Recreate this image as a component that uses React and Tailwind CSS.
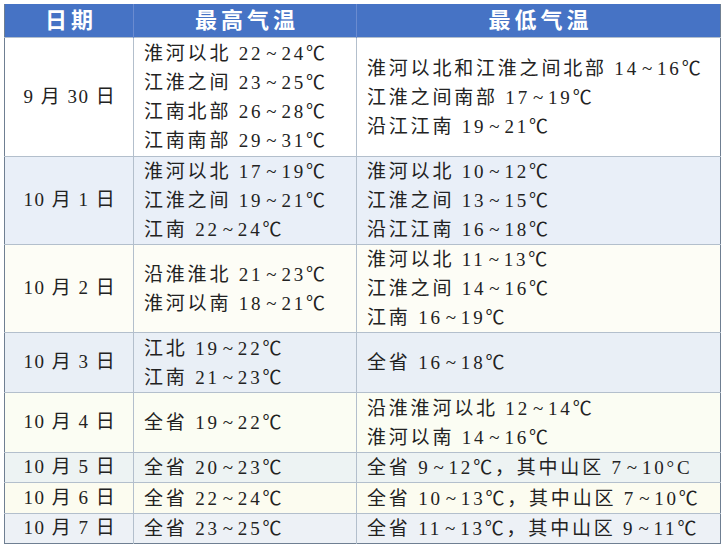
import React from 'react';

const rows = [
  {
    date: '9 月 30 日',
    high: ['淮河以北 22~24℃', '江淮之间 23~25℃', '江南北部 26~28℃', '江南南部 29~31℃'],
    low: ['淮河以北和江淮之间北部 14~16℃', '江淮之间南部 17~19℃', '沿江江南 19~21℃'],
    h: 'h-[119px]',
    bg: 'bg-white',
  },
  {
    date: '10 月 1 日',
    high: ['淮河以北 17~19℃', '江淮之间 19~21℃', '江南 22~24℃'],
    low: ['淮河以北 10~12℃', '江淮之间 13~15℃', '沿江江南 16~18℃'],
    h: 'h-[88px]',
    bg: 'bg-[#e9eff8]',
  },
  {
    date: '10 月 2 日',
    high: ['沿淮淮北 21~23℃', '淮河以南 18~21℃'],
    low: ['淮河以北 11~13℃', '江淮之间 14~16℃', '江南 16~19℃'],
    h: 'h-[88px]',
    bg: 'bg-[#fdfdf6]',
  },
  {
    date: '10 月 3 日',
    high: ['江北 19~22℃', '江南 21~23℃'],
    low: ['全省 16~18℃'],
    h: 'h-[60px]',
    bg: 'bg-[#e9eff6]',
  },
  {
    date: '10 月 4 日',
    high: ['全省 19~22℃'],
    low: ['沿淮淮河以北 12~14℃', '淮河以南 14~16℃'],
    h: 'h-[60px]',
    bg: 'bg-[#fbfdf3]',
  },
  {
    date: '10 月 5 日',
    high: ['全省 20~23℃'],
    low: ['全省 9~12℃，其中山区 7~10°C'],
    h: 'h-[29px]',
    bg: 'bg-[#edf3f3]',
  },
  {
    date: '10 月 6 日',
    high: ['全省 22~24℃'],
    low: ['全省 10~13℃，其中山区 7~10℃'],
    h: 'h-[31px]',
    bg: 'bg-[#fcfcf0]',
  },
  {
    date: '10 月 7 日',
    high: ['全省 23~25℃'],
    low: ['全省 11~13℃，其中山区 9~11℃'],
    h: 'h-[30px]',
    bg: 'bg-[#edf1f6]',
  },
];

// tilde sits a bit tighter than a normal space would give
function Temp({ text }) {
  const parts = text.split('~');
  return (
    <span className="leading-[29px] whitespace-nowrap">
      {parts.map((p, i) => (
        <React.Fragment key={i}>
          {i > 0 && <span className="ml-[3px] mr-[2px]">~</span>}
          {p}
        </React.Fragment>
      ))}
    </span>
  );
}

function Lines({ items }) {
  return (
    <div className="flex flex-col">
      {items.map((t) => (
        <Temp key={t} text={t} />
      ))}
    </div>
  );
}

export default function App() {
  return (
    <div
      className="w-[724px] h-[546px] bg-white pt-[4px] pl-[4px] text-[#222222]"
      style={{ fontFamily: '"Liberation Serif", "Noto Sans CJK SC", serif' }}
    >
      <table className="table-fixed border-collapse w-[716px] border-x border-b border-[#6f7f92]">
        <colgroup>
          <col className="w-[129px]" />
          <col className="w-[223px]" />
          <col className="w-[364px]" />
        </colgroup>
        <thead>
          <tr className="h-[33px] bg-[#4673c5] text-white text-[22px] font-bold tracking-[4px]">
            <th className="font-bold border-r border-[#6a8bd0] pl-[4px]">日期</th>
            <th className="font-bold border-r border-[#6a8bd0] pl-[4px]">最高气温</th>
            <th className="font-bold pl-[4px]">最低气温</th>
          </tr>
        </thead>
        <tbody className="text-[19px] tracking-[2.8px]">
          {rows.map((r) => (
            <tr key={r.date} className={`${r.h} ${r.bg}`}>
              <td className="border-t border-r border-[#b3bfcc] text-center tracking-[1.5px] p-0 pl-[2px]">
                {r.date}
              </td>
              <td className="border-t border-r border-[#b3bfcc] pl-[10px] p-0 align-middle">
                <Lines items={r.high} />
              </td>
              <td className="border-t border-[#b3bfcc] pl-[10px] p-0 align-middle">
                <Lines items={r.low} />
              </td>
            </tr>
          ))}
        </tbody>
      </table>
    </div>
  );
}
